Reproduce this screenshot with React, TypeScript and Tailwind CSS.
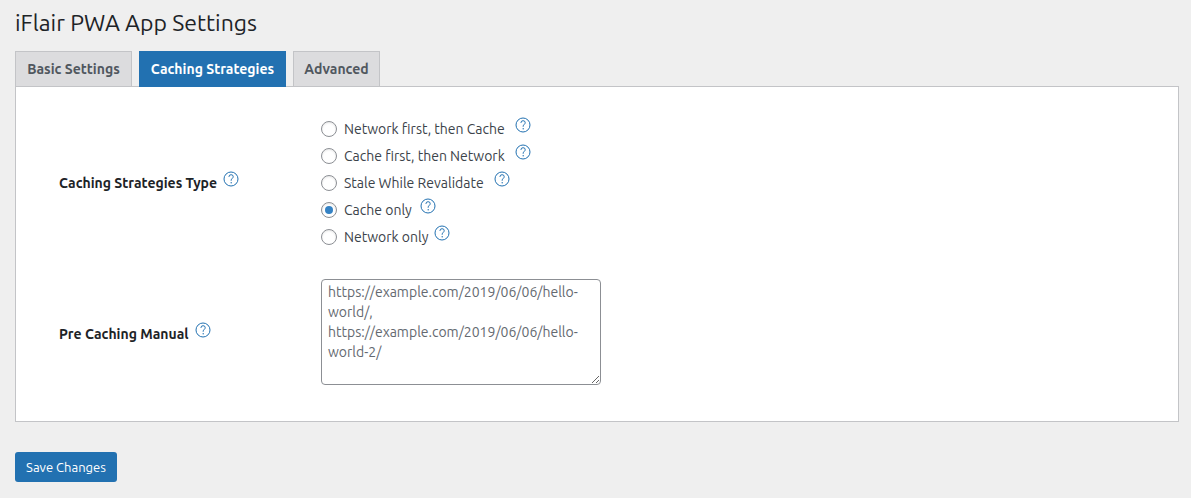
import { useState } from "react";

function HelpIcon({ label }: { label: string }) {
  return (
    <svg
      role="img"
      aria-label={label}
      viewBox="0 0 16 16"
      className="mb-2 size-4 shrink-0 text-[#2271b1]"
      fill="none"
      stroke="currentColor"
    >
      <circle cx="8" cy="8" r="7" strokeWidth="1" />
      <path d="M6 6V5.7a2.1 2 0 0 1 4.2 0c0 1.7-2 1.8-2 3.5v.6" strokeWidth="1" />
      <circle cx="8.2" cy="11.8" r="0.7" fill="currentColor" stroke="none" />
    </svg>
  );
}

const tabs = [
  { name: "Basic Settings", width: "min-w-[117px]" },
  { name: "Caching Strategies", width: "min-w-[147px]" },
  { name: "Advanced", width: "min-w-[87px]" },
];

const strategies = [
  { name: "Network first, then Cache", gap: "gap-2.5" },
  { name: "Cache first, then Network", gap: "gap-2.5" },
  { name: "Stale While Revalidate", gap: "gap-2.5" },
  { name: "Cache only", gap: "gap-2" },
  { name: "Network only", gap: "gap-1.5" },
];

export default function App() {
  const [tab, setTab] = useState("Caching Strategies");
  const [strategy, setStrategy] = useState("Cache only");

  return (
    <main className="min-h-screen bg-[#efefef] pt-2 pr-3 pb-4 pl-[15px] font-['Ubuntu','Noto_Sans',sans-serif] text-sm text-[#3c434a]">
      <h1 className="text-[23px] leading-[30px] text-[#1d2327]">iFlair PWA App Settings</h1>
      <nav className="mt-[13px] flex gap-[7px]">
        {tabs.map((t) => (
          <button
            key={t.name}
            type="button"
            onClick={() => setTab(t.name)}
            className={`${t.width} h-9 cursor-pointer border text-center text-sm font-bold whitespace-nowrap ${
              t.name === tab
                ? "border-[#2271b1] bg-[#2271b1] text-white"
                : "border-[#c3c4c7] bg-[#dcdcde] text-[#50575e]"
            }`}
          >
            {t.name}
          </button>
        ))}
      </nav>
      <form onSubmit={(e) => e.preventDefault()}>
        <div className="-mt-px border border-[#c3c4c7] bg-white px-[43px] pt-7 pb-9">
          <div className="grid grid-cols-[262px_1fr] items-center gap-y-[29px]">
            <div className="flex items-center gap-1.5 font-bold text-[#1d2327]">
              <span id="strategy-label">Caching Strategies Type</span>
              <HelpIcon label="About caching strategies" />
            </div>
            <div role="radiogroup" aria-labelledby="strategy-label">
              {strategies.map((s) => (
                <div key={s.name} className={`flex h-[27px] items-center ${s.gap}`}>
                  <label className="flex items-center gap-[7px]">
                    <input
                      type="radio"
                      name="strategy"
                      checked={strategy === s.name}
                      onChange={() => setStrategy(s.name)}
                      className="grid size-4 appearance-none place-items-center rounded-full border border-[#8c8f94] bg-white shadow-[inset_0_1px_2px_rgba(0,0,0,0.1)] before:size-2 before:rounded-full checked:before:bg-[#3582c4]"
                    />
                    {s.name}
                  </label>
                  <HelpIcon label={`About ${s.name}`} />
                </div>
              ))}
            </div>
            <div className="flex items-center gap-1.5 pt-1 font-bold text-[#1d2327]">
              <label htmlFor="precache">Pre Caching Manual</label>
              <HelpIcon label="About manual pre caching" />
            </div>
            <textarea
              id="precache"
              placeholder={
                "https://example.com/2019/06/06/hello-world/,\nhttps://example.com/2019/06/06/hello-world-2/"
              }
              className="block h-[106px] w-[280px] resize rounded-[4px] border border-[#8c8f94] bg-white px-1.5 py-0.5 text-sm leading-5 placeholder:text-[#646970]"
            />
          </div>
        </div>
        <button
          type="submit"
          className="mt-[30px] h-[30px] min-w-[102px] cursor-pointer rounded-[3px] bg-[#2271b1] px-2 text-[13px] text-white"
        >
          Save Changes
        </button>
      </form>
    </main>
  );
}
